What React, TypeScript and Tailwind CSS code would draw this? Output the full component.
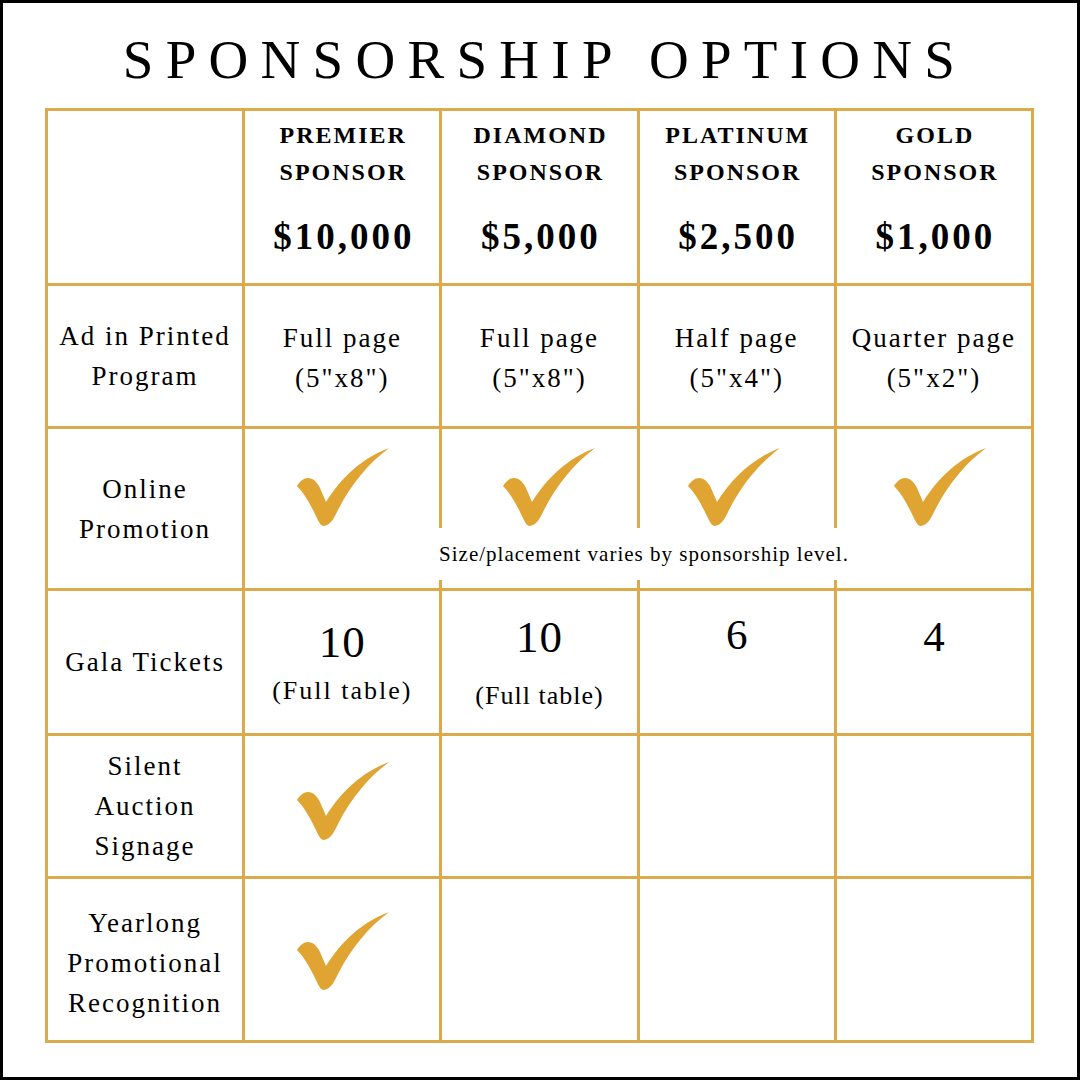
import React from "react";

function Check({ className = "" }: { className?: string }) {
  return (
    <svg
      width="93"
      height="78"
      viewBox="0 0 93 78"
      className={className}
      aria-hidden="true"
    >
      <path
        d="M1,38 C4,33 8,30 12,30 C17,30 21,34 24,40 L30,54 C45,30 66,10 93,0 C73,15 55,36 42,62 C38,70 35,77 28,78 C24,78 22,72 18,64 C13,54 8,45 1,38 Z"
        fill="#dfa431"
      />
    </svg>
  );
}

const headers = [
  { a: "PREMIER", b: "SPONSOR", price: "$10,000" },
  { a: "DIAMOND", b: "SPONSOR", price: "$5,000" },
  { a: "PLATINUM", b: "SPONSOR", price: "$2,500" },
  { a: "GOLD", b: "SPONSOR", price: "$1,000" },
];

const ads = [
  ["Full page", '(5"x8")'],
  ["Full page", '(5"x8")'],
  ["Half page", '(5"x4")'],
  ["Quarter page", '(5"x2")'],
];

function Label({ lines, className = "" }: { lines: string[]; className?: string }) {
  return (
    <div
      className={`bg-white flex flex-col items-center justify-center text-center text-[27px] leading-[40px] tracking-[2px] ${className}`}
    >
      {lines.map((l) => (
        <div key={l}>{l}</div>
      ))}
    </div>
  );
}

export default function App() {
  return (
    <div className="w-[1080px] h-[1080px] border-[3px] border-black bg-white text-black font-['Liberation_Serif',serif] flex flex-col">
      <div className="mt-[29px] h-[55px] leading-[55px] text-[55px] tracking-[12.3px] pl-[10px] text-center whitespace-nowrap">
        SPONSORSHIP OPTIONS
      </div>
      <div className="mt-[21px] ml-[42px] relative grid grid-cols-5 grid-rows-[172px_140px_159px_142px_140px_161px] gap-[3px] p-[3px] bg-[#dcaa4a] w-[989px]">
        {/* header row */}
        <div className="bg-white" />
        {headers.map((h) => (
          <div key={h.a} className="bg-white flex flex-col items-center pt-[6px]">
            <div className="text-[24px] font-bold leading-[37px] tracking-[2px] pl-[2px]">{h.a}</div>
            <div className="text-[24px] font-bold leading-[37px] tracking-[2px] pl-[2px]">{h.b}</div>
            <div className="mt-[26px] text-[37px] font-bold leading-[40px] tracking-[3px] pl-[3px]">{h.price}</div>
          </div>
        ))}

        {/* ad row */}
        <Label lines={["Ad in Printed", "Program"]} />
        {ads.map((a, i) => (
          <div
            key={i}
            className="bg-white flex flex-col items-center justify-center pt-[4px] text-center text-[27px] leading-[40px] tracking-[2px]"
          >
            <div>{a[0]}</div>
            <div>{a[1]}</div>
          </div>
        ))}

        {/* online promotion row */}
        <Label lines={["Online", "Promotion"]} />
        <div className="bg-white flex flex-col items-center pt-[19px]">
          <Check />
        </div>
        <div className="bg-white flex flex-col items-center pt-[19px]">
          <Check className="ml-[19px]" />
        </div>
        <div className="bg-white flex flex-col items-center pt-[19px]">
          <Check className="mr-[6px]" />
        </div>
        <div className="bg-white flex flex-col items-center pt-[19px]">
          <Check className="ml-[11px]" />
        </div>

        {/* gala tickets row */}
        <Label lines={["Gala Tickets"]} />
        <div className="bg-white flex flex-col items-center pt-[29px]">
          <div className="text-[45px] leading-[45px] tracking-[1px]">10</div>
          <div className="mt-[10px] text-[26px] leading-[32px] tracking-[2px]">(Full table)</div>
        </div>
        <div className="bg-white flex flex-col items-center pt-[24px]">
          <div className="text-[45px] leading-[45px] tracking-[1px]">10</div>
          <div className="mt-[20px] text-[26px] leading-[32px] tracking-[1px]">(Full table)</div>
        </div>
        <div className="bg-white flex flex-col items-center pt-[21px]">
          <div className="text-[43px] leading-[45px]">6</div>
        </div>
        <div className="bg-white flex flex-col items-center pt-[23px]">
          <div className="text-[43px] leading-[45px]">4</div>
        </div>

        {/* silent auction row */}
        <Label lines={["Silent", "Auction", "Signage"]} />
        <div className="bg-white flex flex-col items-center pt-[26px]">
          <Check />
        </div>
        <div className="bg-white" />
        <div className="bg-white" />
        <div className="bg-white" />

        {/* yearlong row */}
        <Label lines={["Yearlong", "Promotional", "Recognition"]} className="pt-[6px]" />
        <div className="bg-white flex flex-col items-center pt-[33px]">
          <Check />
        </div>
        <div className="bg-white" />
        <div className="bg-white" />
        <div className="bg-white" />

        {/* note overlay */}
        <div className="absolute left-[391px] top-[420px] w-[416px] h-[52px] bg-white text-center text-[21px] leading-[52px] tracking-[1px] whitespace-nowrap">
          Size/placement varies by sponsorship level.
        </div>
      </div>
    </div>
  );
}
